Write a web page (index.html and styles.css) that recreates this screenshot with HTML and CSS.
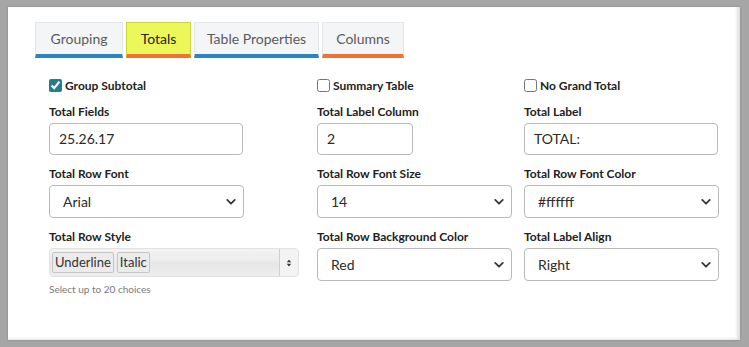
FILE: index.html
```html
<!DOCTYPE html>
<html lang="en">
<head>
    <meta charset="UTF-8">
    <meta name="viewport" content="width=device-width, initial-scale=1.0">
    <title>Totals</title>
<link rel="stylesheet" href="styles.css">
</head>
<body>
<div class="panel">
  <div class="tabs">
    <a class="tab blue t88" href="">Grouping</a>
    <a class="tab orange active t65" href="">Totals</a>
    <a class="tab blue t125" href="">Table Properties</a>
    <a class="tab orange t82" href="">Columns</a>
  </div>

  <div class="form">
    <label class="check"><input type="checkbox" checked> Group Subtotal</label>
    <label class="check"><input type="checkbox"> Summary Table</label>
    <label class="check"><input type="checkbox"> No Grand Total</label>

    <div class="field">
      <div class="label">Total Fields</div>
      <div class="input w194">25.26.17</div>
    </div>
    <div class="field">
      <div class="label">Total Label Column</div>
      <div class="input w96">2</div>
    </div>
    <div class="field">
      <div class="label">Total Label</div>
      <div class="input w194">TOTAL:</div>
    </div>

    <div class="field">
      <div class="label">Total Row Font</div>
      <div class="select w195"><span>Arial</span><svg viewBox="0 0 12 8"><path d="M1.5 1.5 6 6l4.5-4.5"/></svg></div>
    </div>
    <div class="field">
      <div class="label">Total Row Font Size</div>
      <div class="select w195"><span>14</span><svg viewBox="0 0 12 8"><path d="M1.5 1.5 6 6l4.5-4.5"/></svg></div>
    </div>
    <div class="field">
      <div class="label">Total Row Font Color</div>
      <div class="select w195"><span>#ffffff</span><svg viewBox="0 0 12 8"><path d="M1.5 1.5 6 6l4.5-4.5"/></svg></div>
    </div>

    <div class="field">
      <div class="label">Total Row Style</div>
      <div class="multi">
        <div class="tags">
          <span class="tag">Underline</span>
          <span class="tag">Italic</span>
        </div>
        <div class="updown">
          <svg viewBox="0 0 8 10"><path d="M4 0.5 7 4H1zM4 9.5 1 6h6z"/></svg>
        </div>
      </div>
      <div class="help">Select up to 20 choices</div>
    </div>
    <div class="field">
      <div class="label">Total Row Background Color</div>
      <div class="select w195"><span>Red</span><svg viewBox="0 0 12 8"><path d="M1.5 1.5 6 6l4.5-4.5"/></svg></div>
    </div>
    <div class="field">
      <div class="label">Total Label Align</div>
      <div class="select w195"><span>Right</span><svg viewBox="0 0 12 8"><path d="M1.5 1.5 6 6l4.5-4.5"/></svg></div>
    </div>
  </div>
</div>
</body>
</html>
```
FILE: styles.css
```css
*{
	padding:0;
	margin:0;
	box-sizing:border-box;
	}
html,body{
	height:100%;
	}
body{
	background:#a6a6a6;
	padding:7px 9px 7px 8px;
	font-family:Lato, "Liberation Sans", sans-serif;
	color:#212529;
	}
a{
	text-decoration:none;
	}
.panel{
	height:333px;
	background:#fff;
	box-shadow:inset -3px -1px 3px rgba(0,0,0,.12), 0 0 2px rgba(0,0,0,.25);
	padding:15px 20px 0 27px;
	}

/* tabs */
.tabs{
	display:flex;
	gap:3px;
	}
.tab{
	display:block;
	height:36px;
	line-height:31px;
	text-align:center;
	font-size:14px;
	color:#5a5a5a;
	background:#f4f5f7;
	border:1px solid #e4e5e8;
	border-bottom:4px solid #2a84c6;
	}
.tab.orange{
	border-bottom-color:#ee7232;
	}
.tab.active{
	color:#222;
	background:#ecf859;
	border-color:#c9d43c;
	border-bottom-color:#ee7232;
	}
.t88{ width:88px; }
.t65{ width:65px; }
.t125{ width:125px; }
.t82{ width:82px; }

/* form */
.form{
	display:grid;
	grid-template-columns:268px 207px 193px;
	row-gap:10px;
	margin:19px 0 0 14px;
	}
.check{
	display:flex;
	align-items:center;
	height:16px;
	font-size:12px;
	font-weight:bold;
	color:#222;
	}
.check input{
	width:13px;
	height:13px;
	margin:0 3px 0 0;
	accent-color:#267e8c;
	}
.label{
	font-size:12px;
	font-weight:bold;
	line-height:14px;
	padding-top:2px;
	margin-bottom:4px;
	color:#222;
	}
.input,.select{
	border:1px solid #b9b9b9;
	border-radius:4px;
	font-size:14px;
	color:#2b2b2b;
	background:#fff;
	}
.input{
	height:32px;
	line-height:30px;
	padding:0 9px;
	}
.select{
	height:33px;
	display:flex;
	align-items:center;
	justify-content:space-between;
	padding:0 7px 0 13px;
	}
.select svg{
	width:10px;
	height:8px;
	fill:none;
	stroke:#343a40;
	stroke-width:2.2;
	stroke-linecap:round;
	stroke-linejoin:round;
	}
.w194{ width:194px; }
.w195{ width:195px; }
.w96{ width:96px; }

/* multiple select */
.multi{
	width:250px;
	height:29px;
	display:flex;
	border:1px solid #e2e2e2;
	border-radius:4px;
	background:linear-gradient(#f3f3f3, #ececec 45%, #e6e6e6 50%, #eeeeee);
	}
.tags{
	flex:1;
	display:flex;
	align-items:center;
	gap:3px;
	padding-left:2px;
	border-right:1px solid #cfcfcf;
	}
.tag{
	font-size:13px;
	line-height:19px;
	padding:0 2px;
	color:#333;
	background:#ebebeb;
	border:1px solid #c6c6c6;
	border-radius:2px;
	}
.updown{
	width:18px;
	display:flex;
	align-items:center;
	justify-content:center;
	background:#f3f3f3;
	border-radius:0 4px 4px 0;
	}
.updown svg{
	width:6px;
	height:8px;
	fill:#333;
	}
.help{
	font-size:10px;
	color:#7a7a7a;
	margin-top:6px;
	}
```
